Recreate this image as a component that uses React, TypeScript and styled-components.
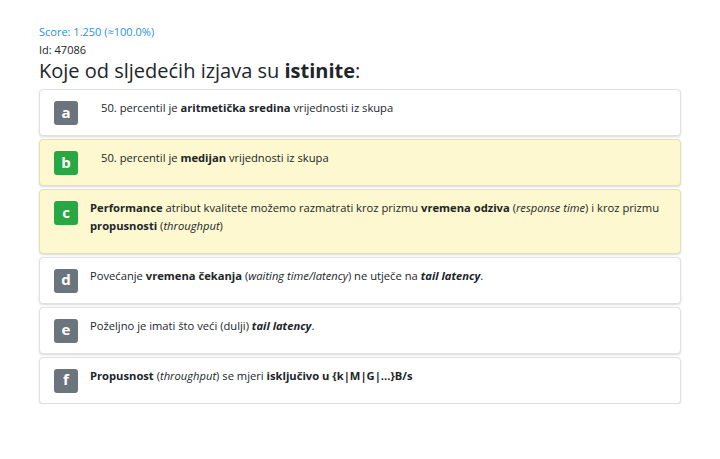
import React from "react";
import styled, { createGlobalStyle } from "styled-components";

const Global = createGlobalStyle`
  html, body { margin: 0; padding: 0; background: #fff; }
  body { font-family: "Open Sans", "Noto Sans", sans-serif; color: #212529; }
`;

const Page = styled.div`
  padding: 24px 39px 0 39px;
  width: 642px;
`;

const Score = styled.div`
  font-size: 11px;
  line-height: 16px;
  color: #2a8fdc;
`;

const Id = styled.div`
  font-size: 11px;
  line-height: 16px;
  margin-top: 2px;
  color: #212529;
`;

const Heading = styled.h1`
  margin: 0 0 5px 0;
  font-size: 20px;
  line-height: 26px;
  font-weight: 400;
  color: #212529;
`;

const List = styled.div`
  display: flex;
  flex-direction: column;
  gap: 3px;
`;

const Card = styled.div<{ $correct?: boolean }>`
  display: flex;
  align-items: flex-start;
  gap: 12px;
  box-sizing: border-box;
  padding: 11px 14px 0 14px;
  background: ${(p) => (p.$correct ? "#fdf8cf" : "#ffffff")};
  border: 1px solid ${(p) => (p.$correct ? "#e6e0b6" : "#e2e2e2")};
  border-radius: 4px;
  box-shadow: 0 1px 2px rgba(0, 0, 0, 0.15);
`;

const Badge = styled.div<{ $correct?: boolean }>`
  flex: none;
  width: 24px;
  height: 24px;
  border-radius: 3px;
  background: ${(p) => (p.$correct ? "#28a745" : "#6c757d")};
  color: #fff;
  font-weight: 700;
  font-size: 15px;
  display: flex;
  align-items: center;
  justify-content: center;
  line-height: 1;
  padding-bottom: 2px;
  box-sizing: border-box;
`;

const Text = styled.div<{ $indent?: boolean }>`
  font-size: 11.2px;
  line-height: 17.5px;
  margin: -2px 0 18.5px 0;
  padding-left: ${(p) => (p.$indent ? "11px" : "0")};
  b { font-weight: 700; }
`;

const items: { letter: string; correct?: boolean; indent?: boolean; content: React.ReactNode }[] = [
  {
    letter: "a",
    indent: true,
    content: (
      <>
        50. percentil je <b>aritmetička sredina</b> vrijednosti iz skupa
      </>
    ),
  },
  {
    letter: "b",
    correct: true,
    indent: true,
    content: (
      <>
        50. percentil je <b>medijan</b> vrijednosti iz skupa
      </>
    ),
  },
  {
    letter: "c",
    correct: true,
    content: (
      <>
        <b>Performance</b> atribut kvalitete možemo razmatrati kroz prizmu <b>vremena odziva</b>{" "}
        (<i>response time</i>) i kroz prizmu <b>propusnosti</b> (<i>throughput</i>)
      </>
    ),
  },
  {
    letter: "d",
    content: (
      <>
        Povećanje <b>vremena čekanja</b> (<i>waiting time/latency</i>) ne utječe na{" "}
        <b>
          <i>tail latency</i>
        </b>
        .
      </>
    ),
  },
  {
    letter: "e",
    content: (
      <>
        Poželjno je imati što veći (dulji){" "}
        <b>
          <i>tail latency</i>
        </b>
        .
      </>
    ),
  },
  {
    letter: "f",
    content: (
      <>
        <b>Propusnost</b> (<i>throughput</i>) se mjeri <b>isključivo u {"{k|M|G|...}"}B/s</b>
      </>
    ),
  },
];

export default function App() {
  return (
    <>
      <Global />
      <Page>
        <Score>Score: 1.250 (≈100.0%)</Score>
        <Id>Id: 47086</Id>
        <Heading>
          Koje od sljedećih izjava su <b>istinite</b>:
        </Heading>
        <List>
          {items.map((it) => (
            <Card key={it.letter} $correct={it.correct}>
              <Badge $correct={it.correct}>{it.letter}</Badge>
              <Text $indent={it.indent}>{it.content}</Text>
            </Card>
          ))}
        </List>
      </Page>
    </>
  );
}
